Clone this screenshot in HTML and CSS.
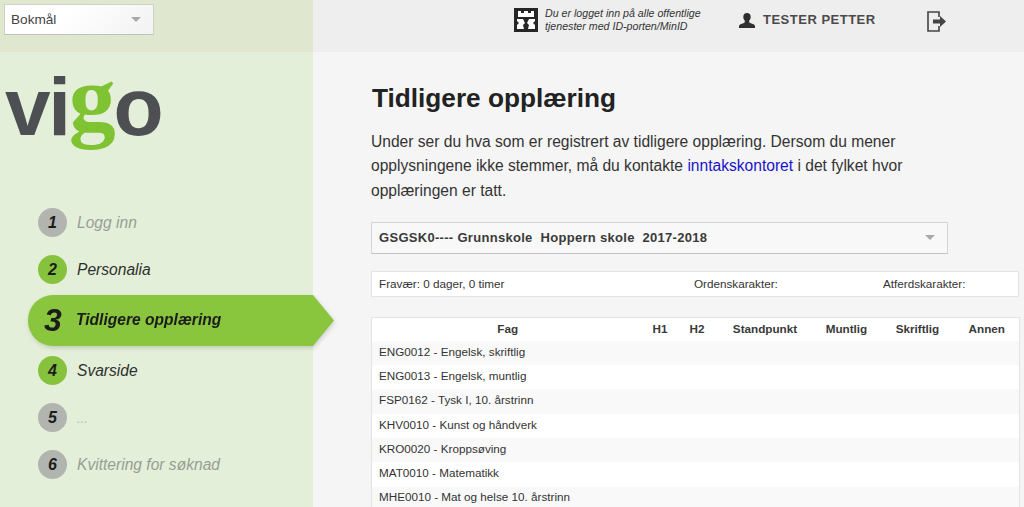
FILE: index.html
```html
<!DOCTYPE html>
<html lang="nb">
<head>
    <meta charset="UTF-8">
    <meta name="viewport" content="width=device-width, initial-scale=1.0">
    <title>Tidligere opplæring - Vigo</title>
    <link rel="stylesheet" href="styles.css">
</head>
<body>
    <div class="shell">
        <aside class="sidebar">
            <div class="lang-bar">
                <div class="select lang-select">
                    <span>Bokmål</span>
                    <span class="caret"></span>
                </div>
            </div>
            <div class="logo"><span class="logo-dark">vi</span><span class="logo-g">g</span><span class="logo-dark">o</span></div>
            <ul class="steps">
                <li class="step step-off"><span class="num">1</span><span class="label">Logg inn</span></li>
                <li class="step step-on"><span class="num">2</span><span class="label">Personalia</span></li>
                <li class="step-current">
                    <div class="step-arrow"><span class="num-big">3</span><span class="label-big">Tidligere opplæring</span></div>
                </li>
                <li class="step step-on"><span class="num">4</span><span class="label">Svarside</span></li>
                <li class="step step-off"><span class="num">5</span><span class="label label-dots">...</span></li>
                <li class="step step-off"><span class="num">6</span><span class="label">Kvittering for søknad</span></li>
            </ul>
        </aside>
        <main class="main">
            <header class="topbar">
                <svg class="castle" viewBox="0 0 24 24" width="24" height="24">
                    <rect width="24" height="24" fill="#262626"/>
                    <path fill="#fff" d="M4 3h3v2h3V3h4v2h3V3h3v6H4z"/>
                    <path fill="#fff" d="M3 11h6l2 4-2 2 1 4H3v-4l2-2-2-2zM21 11h-6l-2 4 2 2-1 4h7v-4l-2-2 2-2z"/>
                </svg>
                <p class="login-note">Du er logget inn på alle offentlige<br>tjenester med ID-porten/MinID</p>
                <svg class="user-icon" viewBox="0 0 16 15" width="16" height="15">
                    <path fill="#2f2f2f" d="M8 0c2.400 0 3.700 1.700 3.700 3.900 0 1.500-.6 2.900-1.500 3.700v1.300c0 .6 1 1 2.300 1.500 1.800.7 3.500 1.300 3.500 2.600V15H0v-2c0-1.300 1.700-1.900 3.500-2.600C4.800 9.900 5.800 9.500 5.800 8.900V7.600c-.9-.8-1.500-2.200-1.500-3.700C4.300 1.700 5.600 0 8 0z"/>
                </svg>
                <span class="user-name">TESTER PETTER</span>
                <svg class="logout-icon" viewBox="0 0 20 21" width="20" height="21">
                    <path fill="none" stroke="#444" stroke-width="1.600" d="M12 6V1H1v19h11v-5"/>
                    <path fill="#444" d="M6 8.500h7V5l6 5.500-6 5.500v-3.500H6z"/>
                </svg>
            </header>
            <section class="content">
                <h1>Tidligere opplæring</h1>
                <p class="intro">Under ser du hva som er registrert av tidligere opplæring. Dersom du mener opplysningene ikke stemmer, må du kontakte <a href="#">inntakskontoret</a> i det fylket hvor opplæringen er tatt.</p>
                <div class="select school-select">
                    <span>GSGSK0---- Grunnskole&nbsp; Hoppern skole&nbsp; 2017-2018</span>
                    <span class="caret"></span>
                </div>
                <div class="info-box">
                    <span class="info-absence">Fravær: 0 dager, 0 timer</span>
                    <span class="info-order">Ordenskarakter:</span>
                    <span>Atferdskarakter:</span>
                </div>
                <table class="grades">
                    <thead>
                        <tr>
                            <th class="col-fag">Fag</th>
                            <th class="col-h1">H1</th>
                            <th class="col-h2">H2</th>
                            <th class="col-stand">Standpunkt</th>
                            <th class="col-munt">Muntlig</th>
                            <th class="col-skrift">Skriftlig</th>
                            <th class="col-annen">Annen</th>
                        </tr>
                    </thead>
                    <tbody>
                        <tr><td>ENG0012 - Engelsk, skriftlig</td><td></td><td></td><td></td><td></td><td></td><td></td></tr>
                        <tr><td>ENG0013 - Engelsk, muntlig</td><td></td><td></td><td></td><td></td><td></td><td></td></tr>
                        <tr><td>FSP0162 - Tysk I, 10. årstrinn</td><td></td><td></td><td></td><td></td><td></td><td></td></tr>
                        <tr><td>KHV0010 - Kunst og håndverk</td><td></td><td></td><td></td><td></td><td></td><td></td></tr>
                        <tr><td>KRO0020 - Kroppsøving</td><td></td><td></td><td></td><td></td><td></td><td></td></tr>
                        <tr><td>MAT0010 - Matematikk</td><td></td><td></td><td></td><td></td><td></td><td></td></tr>
                        <tr><td>MHE0010 - Mat og helse 10. årstrinn</td><td></td><td></td><td></td><td></td><td></td><td></td></tr>
                    </tbody>
                </table>
            </section>
        </main>
    </div>
</body>
</html>
```
FILE: styles.css
```css
* {
    box-sizing: border-box;
}
html, body {
    margin: 0;
    height: 100%;
    overflow: hidden;
}
body {
    font-family: "Liberation Sans", Arial, sans-serif;
    color: #333;
    background: #f5f5f5;
}
.shell {
    display: flex;
    height: 100vh;
    overflow: hidden;
}

/* sidebar */
.sidebar {
    width: 313px;
    flex: none;
    background: #e3efd8;
}
.lang-bar {
    height: 52px;
    padding: 4px;
    background: #dfe8cf;
}
.select {
    display: flex;
    align-items: center;
    justify-content: space-between;
    background: linear-gradient(135deg, #fff 40%, #f2f2f2);
    border: 1px solid #cfd2c8;
    border-bottom-color: #bfc2b8;
}
.lang-select {
    width: 150px;
    height: 31px;
    padding: 0 12px 0 6px;
    font-size: 13.6px;
    color: #444;
}
.caret {
    width: 0;
    height: 0;
    border-left: 5px solid transparent;
    border-right: 5px solid transparent;
    border-top: 5px solid #a9a9a9;
}
.logo {
    height: 116px;
    padding: 1px 0 0 5px;
    font-size: 82px;
    font-weight: bold;
    line-height: 90px;
    letter-spacing: -2.300px;
    color: #4d4f53;
}
.logo-g {
    font-family: "Liberation Serif", serif;
    font-size: 94px;
    vertical-align: 5px;
    color: #7fc232;
}
.steps {
    list-style: none;
    margin: 40px 0 0;
    padding: 0;
}
.step {
    display: flex;
    align-items: center;
    gap: 10px;
    height: 29px;
    margin: 0 0 18px 38px;
    font-size: 15.6px;
    font-style: italic;
}
.num {
    width: 29px;
    height: 29px;
    border-radius: 50%;
    flex: none;
    text-align: center;
    line-height: 29px;
    font-size: 16px;
    font-weight: bold;
    color: #1c1c1c;
}
.label {
    padding-top: 1px;
}
.label-dots {
    font-size: 13px;
    color: #b7bbb2 !important;
}
.step-off .num {
    background: #b2b4b0;
}
.step-off .label {
    color: #999d96;
}
.step-on .num {
    background: #86c23e;
}
.step-on .label {
    color: #2f2f2f;
}
.step-current {
    margin: -7px 0 10px 28px;
    filter: drop-shadow(1px 2px 2px rgba(0, 0, 0, 0.15));
}
.step-arrow {
    display: flex;
    align-items: center;
    width: 306px;
    height: 51px;
    padding-left: 16px;
    background: #8ac53e;
    border-radius: 25px 0 0 25px;
    clip-path: polygon(0 0, 285px 0, 100% 50%, 285px 100%, 0 100%);
    font-style: italic;
    font-weight: bold;
    color: #1c1c1c;
}
.num-big {
    width: 32px;
    font-size: 32px;
}
.label-big {
    padding-bottom: 2px;
    font-size: 15.6px;
}

/* top bar */
.main {
    flex: 1;
    min-width: 0;
}
.topbar {
    display: flex;
    align-items: center;
    height: 52px;
    padding: 0 0 12px 201px;
    background: #eee;
}
.castle {
    flex: none;
}
.login-note {
    margin: 0 0 0 7px;
    width: 194px;
    font-size: 10.65px;
    font-style: italic;
    line-height: 13px;
    color: #333;
}
.user-icon {
    flex: none;
    margin-right: 8px;
    margin-top: 1px;
}
.user-name {
    width: 164px;
    margin-top: -1px;
    font-size: 13px;
    font-weight: bold;
    letter-spacing: 0.5px;
    color: #4a4a4a;
}
.logout-icon {
    flex: none;
    margin-top: 2px;
}

/* content */
.content {
    padding: 30px 0 0 58px;
}
h1 {
    margin: 0 0 16px 1px;
    font-size: 26.2px;
    line-height: 32px;
    font-weight: bold;
    color: #222;
}
.intro {
    margin: 0 0 19px;
    width: 560px;
    font-size: 15.6px;
    line-height: 24.4px;
    color: #333;
}
.intro a {
    color: #1a14c8;
    text-decoration: none;
}
.school-select {
    width: 577px;
    height: 32px;
    padding: 0 12px 2px 7px;
    font-size: 13px;
    font-weight: bold;
    letter-spacing: 0.3px;
    background: #f8f8f8;
    border-color: #d4d4d4;
    border-bottom-color: #c4c4c4;
    color: #3a3a3a;
}
.info-box {
    display: flex;
    align-items: center;
    width: 648px;
    height: 26px;
    margin-top: 17px;
    padding: 0 0 2px 7px;
    background: #fff;
    border: 1px solid #e3e3e3;
    font-size: 11.7px;
    color: #333;
}
.info-absence {
    width: 315px;
}
.info-order {
    width: 189px;
}
.grades {
    width: 648px;
    margin-top: 20px;
    table-layout: fixed;
    border-collapse: collapse;
    background: #fff;
    border: 1px solid #e3e3e3;
    font-size: 11.7px;
    color: #333;
}
.grades th {
    height: 23px;
    padding: 0 0 2px;
    font-weight: bold;
    color: #3a3a3a;
}
.grades td {
    height: 24.3px;
    padding: 0 0 3px 7px;
    white-space: nowrap;
}
.grades tbody tr:nth-child(odd) {
    background: #f9f9f9;
}
.col-fag { width: 272px; }
.col-h1 { width: 33px; }
.col-h2 { width: 41px; }
.col-stand { width: 95px; }
.col-munt { width: 68px; }
.col-skrift { width: 74px; }
.col-annen { width: 65px; }
```
